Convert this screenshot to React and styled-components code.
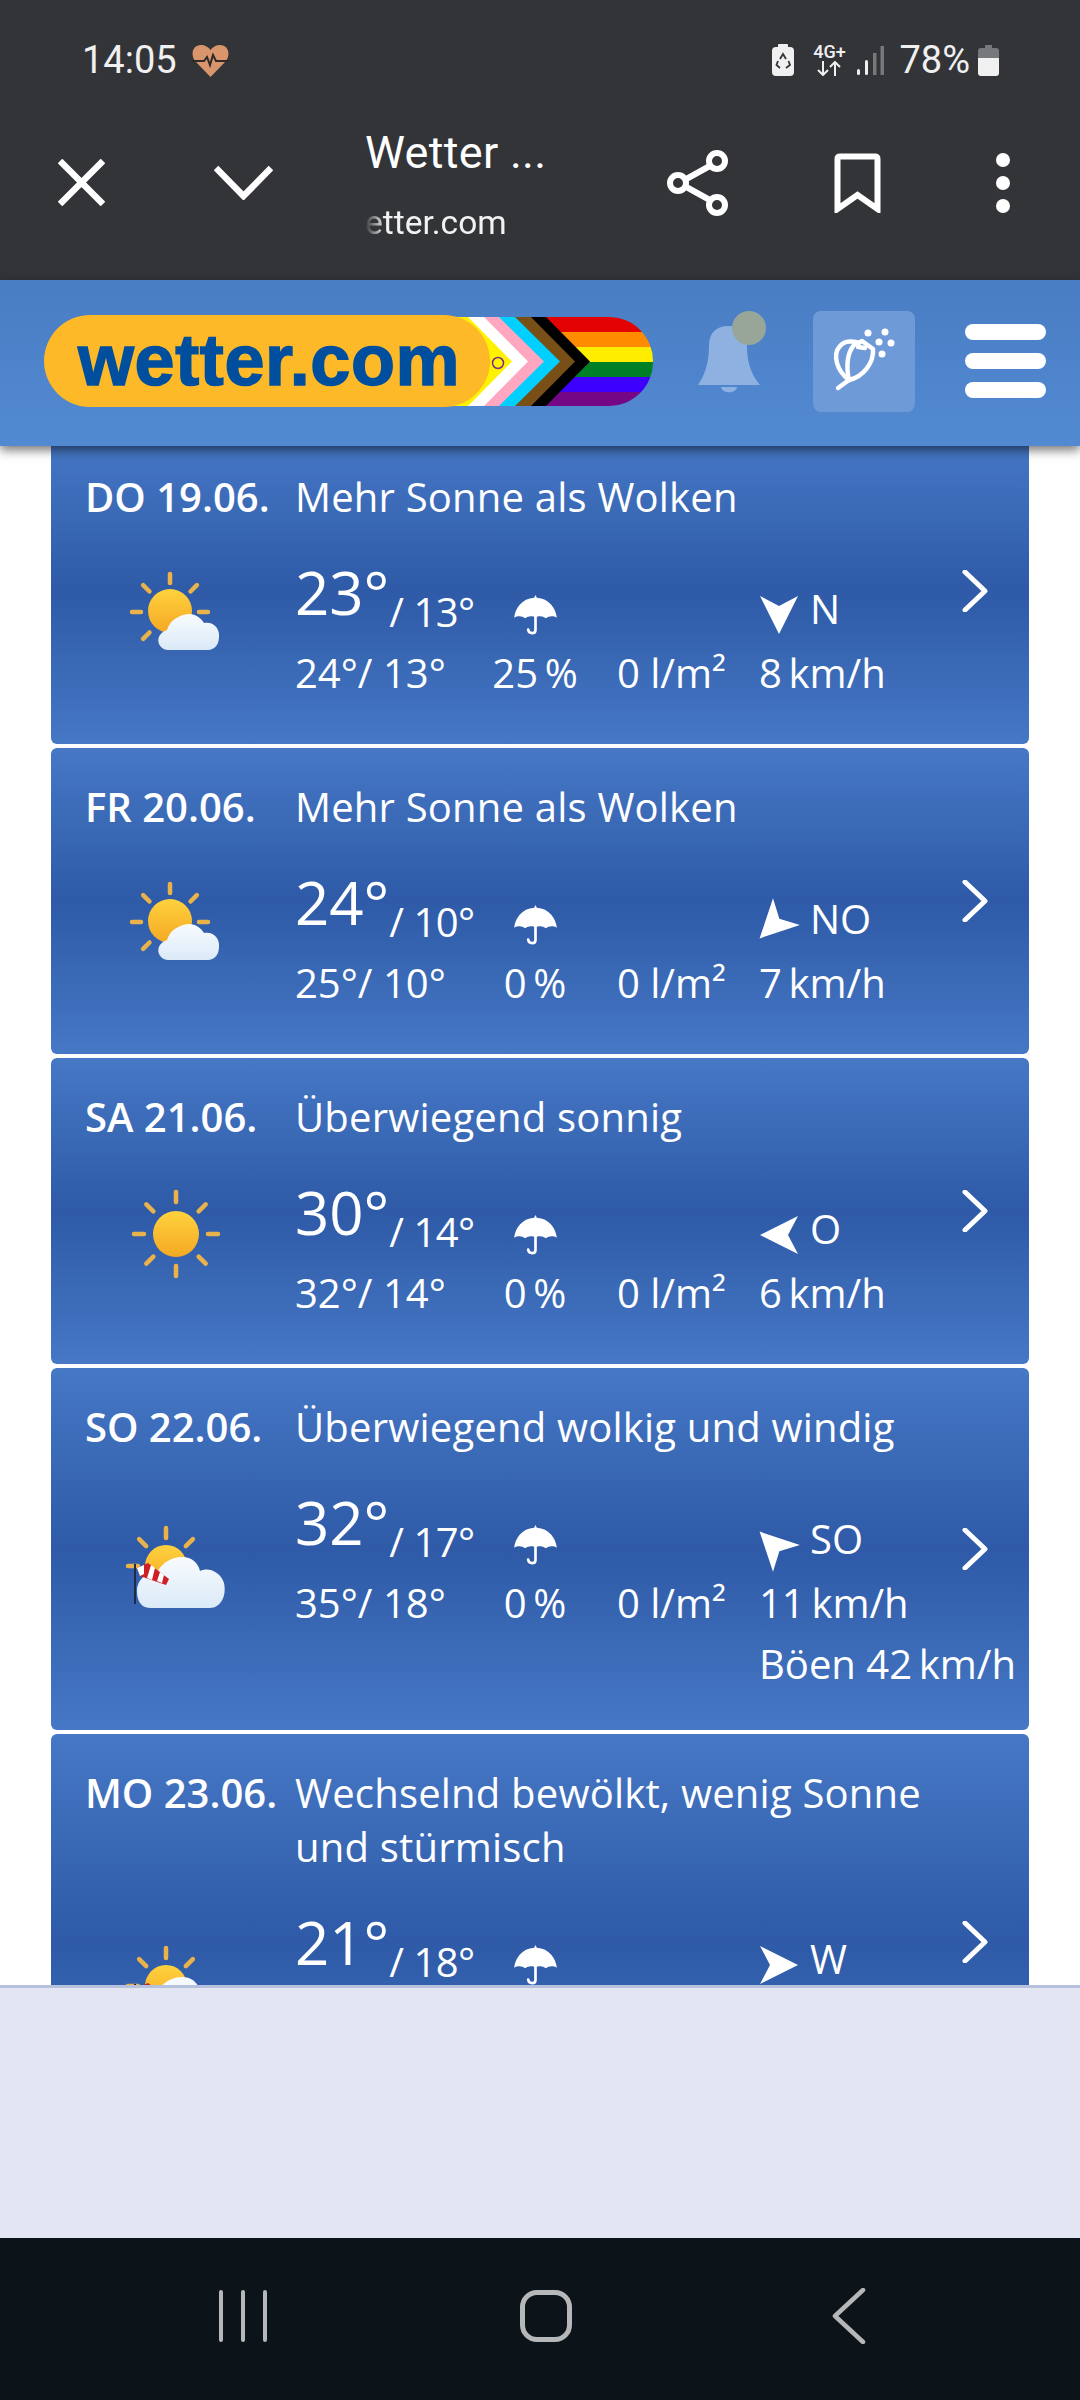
import React from "react";
import styled, { createGlobalStyle } from "styled-components";

const GlobalStyle = createGlobalStyle`
  html, body {
    margin: 0;
    padding: 0;
    background: #fff;
  }
`;

const days = [
  { date: "DO 19.06.", text: "Mehr Sonne als Wolken", icon: "partly", high: "23°", low: "13°", range: "24°/ 13°", chance: "25\u2009%", rain: "0 l/m²", dir: "N", deg: 0, speed: "8\u2009km/h" },
  { date: "FR 20.06.", text: "Mehr Sonne als Wolken", icon: "partly", high: "24°", low: "10°", range: "25°/ 10°", chance: "0\u2009%", rain: "0 l/m²", dir: "NO", deg: 45, speed: "7\u2009km/h" },
  { date: "SA 21.06.", text: "Überwiegend sonnig", icon: "sun", high: "30°", low: "14°", range: "32°/ 14°", chance: "0\u2009%", rain: "0 l/m²", dir: "O", deg: 90, speed: "6\u2009km/h" },
  { date: "SO 22.06.", text: "Überwiegend wolkig und windig", icon: "wind", high: "32°", low: "17°", range: "35°/ 18°", chance: "0\u2009%", rain: "0 l/m²", dir: "SO", deg: 135, speed: "11\u2009km/h", gust: "Böen 42\u2009km/h" },
  { date: "MO 23.06.", text: "Wechselnd bewölkt, wenig Sonne und stürmisch", icon: "wind", high: "21°", low: "18°", dir: "W", deg: 270, tall: true },
];

const Rays = ({ cx, cy, inner, outer, angles }) => (
  <g stroke="#e9b24a" strokeWidth="4.5" strokeLinecap="round">
    {angles.map((a) => {
      const r = (a * Math.PI) / 180;
      return (
        <line
          key={a}
          x1={cx + Math.cos(r) * inner}
          y1={cy + Math.sin(r) * inner}
          x2={cx + Math.cos(r) * outer}
          y2={cy + Math.sin(r) * outer}
        />
      );
    })}
  </g>
);

const WeatherIcon = ({ kind }) => (
  <IconBox viewBox="0 0 110 100">
    <defs>
      <linearGradient id="sunFill" x1="0" y1="0" x2="0" y2="1">
        <stop offset="0" stopColor="#ffd23e" />
        <stop offset="1" stopColor="#f4a823" />
      </linearGradient>
      <linearGradient id="cloudFill" x1="0" y1="0" x2="0" y2="1">
        <stop offset="0" stopColor="#f8fbfe" />
        <stop offset="1" stopColor="#dbeaf8" />
      </linearGradient>
    </defs>
    {kind === "partly" && (
      <>
        <Rays cx={50} cy={51} inner={29} outer={38} angles={[180, 225, 270, 315, 0, 135]} />
        <circle cx="50" cy="50" r="22" fill="url(#sunFill)" />
        <path
          d="M48 89 C38 89 33 74 47 69 C50 58 62 53 69 53 C76 53 82 58 84 62 C94 60 100 68 99 76 C99 84 94 89 88 89 Z"
          fill="url(#cloudFill)"
        />
      </>
    )}
    {kind === "sun" && (
      <>
        <Rays cx={56} cy={53} inner={32} outer={42} angles={[0, 45, 90, 135, 180, 225, 270, 315]} />
        <circle cx="56" cy="53" r="23" fill="url(#sunFill)" />
      </>
    )}
    {kind === "wind" && (
      <g transform="translate(0 2)">
        <Rays cx={46} cy={45} inner={28} outer={38} angles={[180, 225, 270, 315]} />
        <circle cx="46" cy="45" r="21" fill="url(#sunFill)" />
        <path
          d="M30 87 C20 87 17 78 17 70 C17 58 28 50 38 50 C42 42 52 36 62 36 C72 36 78 42 80 50 C88 46 100 50 104 62 C107 76 100 87 90 87 Z"
          fill="url(#cloudFill)"
        />
        <line x1="15" y1="43" x2="15" y2="83" stroke="#1d2c46" strokeWidth="2" />
        <path d="M17 47 L28 42 L49 58 L46 64 L20 55 Z" fill="#cf2027" />
        <path d="M17 47 L24 44 L24 53 L20 55 Z" fill="#fff" />
        <path d="M31 44 L35 47 L32 59 L27 57 Z" fill="#fff" />
        <path d="M40 51 L44 54 L42 62 L37 60 Z" fill="#fff" />
      </g>
    )}
  </IconBox>
);

const Umbrella = () => (
  <UmbrellaIcon viewBox="0 0 128 120">
    <path
      d="M64 0 L68 8 C105 10 125 40 128 68 C118 62 104 62 95 70 C86 62 72 62 64 68 C56 62 42 62 33 70 C24 62 10 62 0 68 C3 40 23 10 60 8 Z"
      fill="#fff"
    />
    <path d="M64 62 L64 104 C64 118 44 118 42 104" fill="none" stroke="#fff" strokeWidth="8" strokeLinecap="round" />
  </UmbrellaIcon>
);

const DayCard = ({ day }) => (
  <Card>
    <TitleRow>
      <DateLabel>{day.date}</DateLabel>
      <Summary>{day.text}</Summary>
    </TitleRow>
    <Body $tall={day.tall}>
      <IconCell>
        <WeatherIcon kind={day.icon} />
      </IconCell>
      <Data>
        <TempCell>
          <HighTemp>{day.high}</HighTemp>
          <LowTemp>/ {day.low}</LowTemp>
        </TempCell>
        <RainIconCell>
          <Umbrella />
        </RainIconCell>
        <span />
        <WindCell>
          <WindArrow viewBox="0 0 40 40" $deg={day.deg}>
            <path d="M1 1 L20 11 L39 1 L20 39 Z" fill="#fff" />
          </WindArrow>
          <WindDir>{day.dir}</WindDir>
        </WindCell>
        {day.range && (
          <>
            <Value>{day.range}</Value>
            <Value $center>{day.chance}</Value>
            <Amount>{day.rain}</Amount>
            <Value>{day.speed}</Value>
          </>
        )}
        {day.gust && <Gust>{day.gust}</Gust>}
      </Data>
    </Body>
    <Chevron viewBox="0 0 26 42">
      <path d="M3 2 L23 21 L3 40" fill="none" stroke="#fff" strokeWidth="5" strokeLinecap="round" strokeLinejoin="round" />
    </Chevron>
  </Card>
);

const App = () => (
  <>
    <GlobalStyle />
    <Page>
      <StatusBar>
        <Clock>14:05</Clock>
        <HeartIcon viewBox="0 0 37 33">
          <path d="M18.5 33 L3 17 C-2 10 1 1 9 1 C13 1 16.5 3 18.5 6 C20.5 3 24 1 28 1 C36 1 39 10 34 17 Z" fill="#d9966c" />
          <path d="M0 17 L12 17 L15 13 L18 21 L21 11 L24 17 L37 17" fill="none" stroke="#2f2a2a" strokeWidth="2" />
        </HeartIcon>
        <StatusRight>
          <SaverIcon viewBox="0 0 22 32">
            <rect x="6" y="0" width="10" height="4" rx="1" fill="#f0f0f0" />
            <rect x="0" y="3" width="22" height="29" rx="4" fill="#f0f0f0" />
            <path d="M8 15 L11 10 L14 15 M16.5 17 L18 21 L14 24 M8 24 L4.500 21 L6 17" fill="none" stroke="#333438" strokeWidth="1.8" />
          </SaverIcon>
          <NetworkStack>
            <NetworkType>4G+</NetworkType>
            <svg width="24" height="15" viewBox="0 0 24 15">
              <path d="M6 0 L6 14 M1 9 L6 14 L11 9 M18 15 L18 1 M13 6 L18 1 L23 6" fill="none" stroke="#f0f0f0" strokeWidth="2" />
            </svg>
          </NetworkStack>
          <SignalIcon viewBox="0 0 27 29">
            <rect x="0" y="23" width="3" height="6" rx="1.5" fill="#f0f0f0" />
            <rect x="8" y="14" width="3" height="15" rx="1.5" fill="#f0f0f0" />
            <rect x="16" y="7" width="3.5" height="22" fill="#77787b" />
            <rect x="23.5" y="0" width="3.5" height="29" fill="#77787b" />
          </SignalIcon>
          <Percent>78%</Percent>
          <BatteryIcon viewBox="0 0 21 31">
            <path d="M7 0 H14 V3 H18 Q21 3 21 6 V13 H0 V6 Q0 3 3 3 H7 Z" fill="#77787b" />
            <path d="M0 13 H21 V28 Q21 31 18 31 H3 Q0 31 0 28 Z" fill="#f0f0f0" />
          </BatteryIcon>
        </StatusRight>
      </StatusBar>

      <BrowserBar>
        <BarIcon width="47" height="47" viewBox="0 0 47 47">
          <path d="M2 2 L45 45 M45 2 L2 45" stroke="#fff" strokeWidth="6.5" fill="none" />
        </BarIcon>
        <BarIcon width="59" height="35" viewBox="0 0 59 35">
          <path d="M2 3 L29.5 31 L57 3" stroke="#fff" strokeWidth="6.5" fill="none" />
        </BarIcon>
        <PageInfo>
          <PageTitle>Wetter ...</PageTitle>
          <PageUrl>etter.com</PageUrl>
        </PageInfo>
        <BarIcon width="62" height="68" viewBox="0 0 62 68">
          <path d="M50 13 L12 34 L50 55" stroke="#fff" strokeWidth="6" fill="none" />
          <circle cx="50" cy="12" r="8" fill="#333438" stroke="#fff" strokeWidth="6" />
          <circle cx="11" cy="34" r="8" fill="#333438" stroke="#fff" strokeWidth="6" />
          <circle cx="50" cy="56" r="8" fill="#333438" stroke="#fff" strokeWidth="6" />
        </BarIcon>
        <BarIcon width="47" height="60" viewBox="0 0 47 60">
          <path d="M3.5 56 L3.5 6 Q3.5 3.5 6 3.5 L41 3.5 Q43.5 3.5 43.5 6 L43.5 56 L23.5 42 Z" stroke="#fff" strokeWidth="6" fill="none" />
        </BarIcon>
        <BarIcon width="14" height="60" viewBox="0 0 14 60">
          <circle cx="7" cy="7" r="7" fill="#fff" />
          <circle cx="7" cy="30" r="7" fill="#fff" />
          <circle cx="7" cy="53" r="7" fill="#fff" />
        </BarIcon>
      </BrowserBar>

      <SiteHeader>
        <Logo>
          <PrideFlag viewBox="0 0 213 89">
            <rect y="0" width="213" height="15" fill="#e40303" />
            <rect y="15" width="213" height="15" fill="#ff8c00" />
            <rect y="30" width="213" height="15" fill="#ffed00" />
            <rect y="45" width="213" height="15" fill="#008026" />
            <rect y="60" width="213" height="15" fill="#3d00ff" />
            <rect y="75" width="213" height="14" fill="#750787" />
            <path d="M0 0 H106 L150 44.5 L106 89 H0 Z" fill="#000" />
            <path d="M0 0 H91 L135 44.5 L91 89 H0 Z" fill="#784f17" />
            <path d="M0 0 H75 L120 44.5 L75 89 H0 Z" fill="#00cfff" />
            <path d="M0 0 H59 L104 44.5 L59 89 H0 Z" fill="#ffa6c0" />
            <path d="M0 0 H44 L88 44.5 L44 89 H0 Z" fill="#fff" />
            <path d="M0 0 H28 L72 44.5 L28 89 H0 Z" fill="#fff200" />
            <circle cx="58" cy="46" r="5.5" fill="none" stroke="#7a2a8a" strokeWidth="1.5" />
          </PrideFlag>
          <LogoPill>wetter.com</LogoPill>
        </Logo>
        <BellIcon viewBox="0 0 72 85">
          <path d="M3 75 C12 62 14 48 14 36 C14 22 22 16 33 16 C44 16 52 22 52 36 C52 48 54 62 65 75 Z" fill="#8fb1e1" />
          <path d="M26 77 H42 C41 84 27 84 26 77 Z" fill="#8fb1e1" />
          <circle cx="54" cy="18" r="17" fill="#98a69a" />
        </BellIcon>
        <PollenButton>
          <svg width="102" height="101" viewBox="0 0 102 101">
            <g fill="none" stroke="#fff" strokeWidth="4.5" strokeLinecap="round" strokeLinejoin="round">
              <path d="M25 77 L36 69" />
              <path d="M36 69 C24 60 19 44 27 35 C32 29 42 30 46 32" />
              <path d="M36 69 C50 66 61 52 60 38 L49 30 L41 34 C34 42 33 56 36 69 Z" />
              <path d="M45 36 L52 37" />
            </g>
            <g fill="#fff">
              <circle cx="55" cy="22" r="3.5" />
              <circle cx="72" cy="21" r="3.5" />
              <circle cx="66" cy="31" r="3.5" />
              <circle cx="78" cy="32" r="3.5" />
              <circle cx="69" cy="43" r="3.5" />
            </g>
          </svg>
        </PollenButton>
        <Burger>
          <span />
          <span />
          <span />
        </Burger>
      </SiteHeader>

      <Content>
        <CardList>
          {days.map((day) => (
            <DayCard key={day.date} day={day} />
          ))}
        </CardList>
      </Content>

      <BottomPanel />

      <NavBar>
        <svg width="48" height="52" viewBox="0 0 48 52">
          <path d="M2 2 V50 M24 2 V50 M46 2 V50" stroke="#b5b7b9" strokeWidth="4" strokeLinecap="round" />
        </svg>
        <HomeButton />
        <svg width="34" height="56" viewBox="0 0 34 56">
          <path d="M31 2 L3 28 L31 54" fill="none" stroke="#b5b7b9" strokeWidth="4.5" strokeLinecap="round" strokeLinejoin="round" />
        </svg>
      </NavBar>
    </Page>
  </>
);

export default App;

const Page = styled.div`
  width: 1080px;
  height: 2400px;
  display: flex;
  flex-direction: column;
  overflow: hidden;
  background: #fff;
  font-family: "Open Sans", "Liberation Sans", sans-serif;
`;

const StatusBar = styled.div`
  height: 120px;
  flex: none;
  display: flex;
  align-items: center;
  padding-left: 82px;
  background: #333438;
  color: #f0f0f0;
  font-family: Roboto, "Liberation Sans", sans-serif;
`;

const Clock = styled.span`
  font-size: 38px;
`;

const HeartIcon = styled.svg`
  width: 37px;
  height: 33px;
  margin-left: 15px;
`;

const StatusRight = styled.div`
  margin-left: auto;
  padding-right: 81px;
  display: flex;
  align-items: center;
`;

const SaverIcon = styled.svg`
  width: 22px;
  height: 32px;
`;

const NetworkStack = styled.div`
  display: flex;
  flex-direction: column;
  align-items: center;
  gap: 2px;
  width: 34px;
  margin-left: 18px;
`;

const NetworkType = styled.span`
  font-size: 18px;
  font-weight: 500;
  line-height: 14px;
`;

const SignalIcon = styled.svg`
  width: 27px;
  height: 29px;
  margin-left: 11px;
`;

const Percent = styled.span`
  font-size: 38px;
  margin-left: 15px;
`;

const BatteryIcon = styled.svg`
  width: 21px;
  height: 31px;
  margin-left: 8px;
`;

const BrowserBar = styled.div`
  height: 160px;
  flex: none;
  display: grid;
  grid-template-columns: 156px 151px 302px 167px 162px auto;
  grid-template-rows: 125px;
  align-items: center;
  padding-left: 58px;
  box-sizing: border-box;
  background: #333438;
  color: #fff;
  font-family: Roboto, "Liberation Sans", sans-serif;
`;

const BarIcon = styled.svg`
  display: block;
`;

const PageInfo = styled.div`
  align-self: start;
  width: 190px;
`;

const PageTitle = styled.div`
  font-size: 45px;
  line-height: 66px;
  letter-spacing: 0.3px;
  white-space: nowrap;
`;

const PageUrl = styled.div`
  width: 146px;
  margin-top: 7px;
  font-size: 33.5px;
  line-height: 60px;
  color: #f2f2f2;
  white-space: nowrap;
  mask-image: linear-gradient(to right, transparent, #000 20px);
`;

const SiteHeader = styled.header`
  height: 166px;
  flex: none;
  position: relative;
  z-index: 2;
  display: flex;
  align-items: center;
  padding: 0 0 4px 44px;
  box-sizing: border-box;
  background: linear-gradient(#497dc3, #528ad2);
  box-shadow: 0 4px 10px rgba(0, 0, 0, 0.55);
`;

const Logo = styled.div`
  position: relative;
  width: 609px;
  height: 92px;
  flex: none;
`;

const PrideFlag = styled.svg`
  position: absolute;
  right: 0;
  top: 2px;
  width: 213px;
  height: 89px;
  border-radius: 0 44px 44px 0;
`;

const LogoPill = styled.div`
  position: relative;
  width: 446px;
  height: 92px;
  box-sizing: border-box;
  padding-left: 34px;
  border-radius: 46px;
  background: #fdb927;
  color: #004f9f;
  font-family: "Liberation Sans", Arial, sans-serif;
  font-size: 72px;
  font-weight: 700;
  line-height: 90px;
  letter-spacing: 0.6px;
  -webkit-text-stroke: 1.5px #004f9f;
`;

const BellIcon = styled.svg`
  width: 72px;
  height: 85px;
  flex: none;
  margin: 0 0 17px 42px;
`;

const PollenButton = styled.div`
  width: 102px;
  height: 101px;
  flex: none;
  margin-left: 46px;
  border-radius: 8px;
  background: #6f9ad8;
`;

const Burger = styled.div`
  width: 81px;
  flex: none;
  margin-left: 50px;
  display: flex;
  flex-direction: column;
  gap: 13px;

  span {
    height: 16px;
    border-radius: 8px;
    background: #fff;
  }
`;

const Content = styled.main`
  flex: 1;
  min-height: 0;
  overflow: hidden;
  background: #fff;
`;

const CardList = styled.div`
  margin-top: -8px;
  padding: 0 51px;
  display: flex;
  flex-direction: column;
  gap: 4px;
`;

const Card = styled.article`
  position: relative;
  padding: 32px 0 41px 34px;
  border-radius: 6px;
  background: linear-gradient(#4678c5, #2e5aa7 50%, #4678c5);
  color: #fff;
  font-size: 40px;
`;

const TitleRow = styled.div`
  display: flex;
  line-height: 54px;
  margin-bottom: 46px;
`;

const DateLabel = styled.div`
  width: 210px;
  flex: none;
  font-weight: 600;
  white-space: nowrap;
`;

const Summary = styled.div`
  width: 690px;
  letter-spacing: 0.2px;
`;

const Body = styled.div`
  display: flex;
  min-height: ${({ $tall }) => ($tall ? "189px" : "auto")};
`;

const IconCell = styled.div`
  width: 210px;
  flex: none;
  display: flex;
  align-items: center;
`;

const IconBox = styled.svg`
  width: 110px;
  height: 100px;
  margin: -26px 0 26px 35px;
  overflow: visible;
`;

const Data = styled.div`
  display: grid;
  grid-template-columns: 180px 120px 164px 270px;
  grid-template-rows: 72px 61px;
  grid-auto-rows: 56px;
  align-content: start;
  line-height: 61px;
`;

const TempCell = styled.div`
  white-space: nowrap;
  line-height: 60px;
  margin-top: -8px;
`;

const HighTemp = styled.span`
  font-size: 60px;
`;

const LowTemp = styled.span`
  letter-spacing: -0.5px;
  vertical-align: -12px;
`;

const RainIconCell = styled.div`
  display: flex;
  justify-content: center;
  padding-top: 25px;
`;

const UmbrellaIcon = styled.svg`
  width: 43px;
  height: 40px;
`;

const WindCell = styled.div`
  display: flex;
  align-items: flex-start;
  gap: 11px;
`;

const WindArrow = styled.svg`
  width: 40px;
  height: 40px;
  margin-top: 25px;
  transform: translateX(${({ $deg }) => ($deg % 90 ? -6 : 0)}px) rotate(${({ $deg }) => $deg}deg);
`;

const WindDir = styled.span`
  line-height: 72px;
  margin-top: 3px;
`;

const Value = styled.div`
  white-space: nowrap;
  text-align: ${({ $center }) => ($center ? "center" : "left")};
`;

const Amount = styled(Value)`
  padding-left: 22px;
`;

const Gust = styled(Value)`
  grid-column: 4;
`;

const Chevron = styled.svg`
  position: absolute;
  right: 41px;
  top: 50%;
  width: 26px;
  height: 42px;
  transform: translateY(-50%);
`;

const BottomPanel = styled.div`
  height: 253px;
  flex: none;
  position: relative;
  box-sizing: border-box;
  border-top: 3px solid #b6c1de;
  background: #e3e6f2;
`;

const NavBar = styled.nav`
  height: 162px;
  flex: none;
  display: grid;
  grid-template-columns: repeat(3, 303px);
  justify-content: center;
  justify-items: center;
  align-items: center;
  padding: 0 0 6px 12px;
  box-sizing: border-box;
  background: #0c141a;
`;

const HomeButton = styled.div`
  width: 52px;
  height: 52px;
  box-sizing: border-box;
  border: 5px solid #b5b7b9;
  border-radius: 17px;
`;
